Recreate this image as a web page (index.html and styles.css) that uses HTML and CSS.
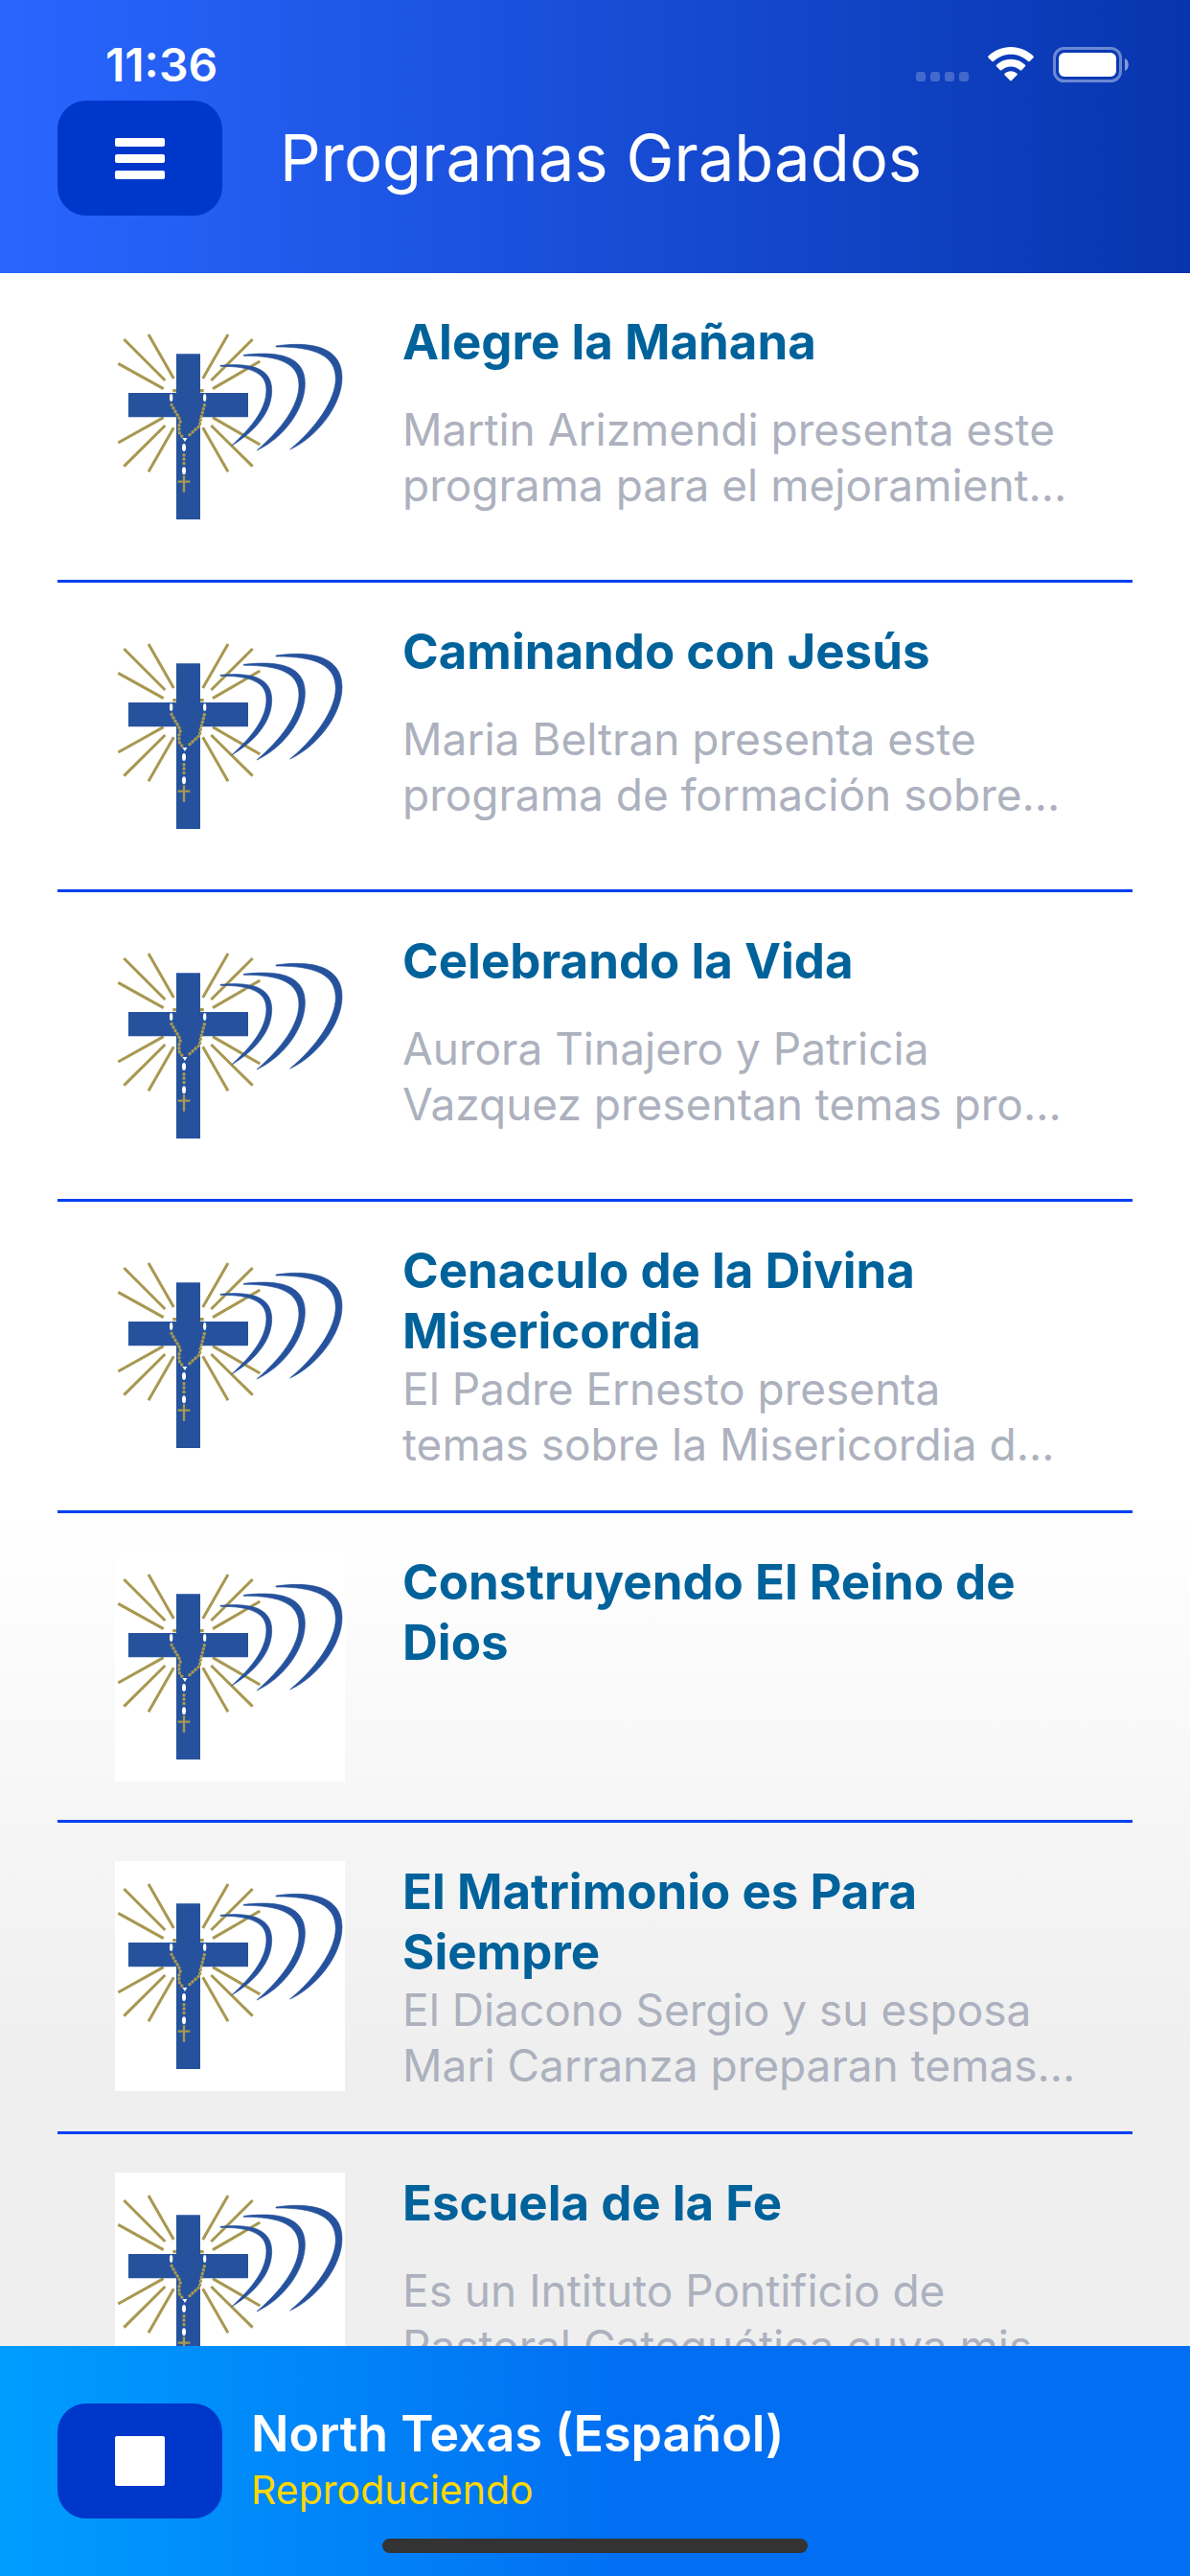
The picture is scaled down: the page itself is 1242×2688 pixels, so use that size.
FILE: index.html
```
<!DOCTYPE html>
<html lang="es">
<head>
    <meta charset="UTF-8">
    <meta name="viewport" content="width=device-width, initial-scale=1.0">
    <title>Programas Grabados</title>
    <link rel="stylesheet" href="styles.css">
</head>
<body>
    <!-- Logo compartido por todos los programas -->
    <svg class="sprite" aria-hidden="true">
        <symbol id="logo" viewBox="60 15 720 720">
            <rect x="60" y="15" width="720" height="720" fill="#fff"/>
            <g stroke="#a89850" stroke-width="9" fill="none">
                <path d="M70 178L212 257M88 102L217 231M165 87L244 225"/>
                <path d="M414 87L335 225M491 102L361 231M514 171L366 257"/>
                <path d="M70 426L212 347M88 500L217 372M165 517L244 379"/>
                <path d="M414 517L335 379M491 500L361 372M514 432L366 347"/>
            </g>
            <path d="M252 148h75v122h150v76H327v320h-75V346H102v-76h150z" fill="#26529d"/>
            <g fill="#26529d" stroke="#26529d" stroke-width="2">
                <path d="M390 184C480 176 551 188 551 262C551 330 500 390 425 435C490 375 534 320 534 260C534 208 485 186 390 187z"/>
                <path d="M463 151C560 140 655 148 655 240C655 320 590 410 504 450C580 385 636 310 636 245C636 178 575 153 463 154z"/>
                <path d="M564 123C670 108 771 123 771 222C771 310 690 410 608 447C690 380 751 290 751 226C751 155 690 125 564 126z"/>
            </g>
            <g stroke="#a89850" stroke-width="10" stroke-linecap="round" fill="none">
                <path d="M241 263h11M327 263h11" stroke-linecap="butt"/>
                <path d="M237 307L247 325L258 343L265 358L260 375L262 395L270 406" stroke-dasharray="1 11"/>
                <path d="M340 308L333 335L328 355L325 374L308 388L288 406" stroke-dasharray="1 11"/>
                <path d="M276 464v30" stroke-dasharray="1 12"/>
            </g>
            <g fill="#fff">
                <ellipse cx="236" cy="285" rx="5" ry="12"/>
                <ellipse cx="341" cy="285" rx="5" ry="12"/>
                <ellipse cx="276" cy="441" rx="6" ry="12"/>
                <ellipse cx="276" cy="514" rx="6" ry="12"/>
                <path d="M271 411h15l-7 12z"/>
            </g>
            <path d="M276 529v52M257 548h38" stroke="#a89850" stroke-width="7"/>
        </symbol>
    </svg>

    <header class="header">
        <div class="status-bar">
            <time class="status-time">11:36</time>
            <div class="status-icons">
                <svg class="icon-signal" viewBox="0 0 55 36" aria-hidden="true">
                    <g fill="#fff" opacity=".22">
                        <rect x="0" y="26" width="10" height="10" rx="3"/>
                        <rect x="15" y="26" width="10" height="10" rx="3"/>
                        <rect x="30" y="26" width="10" height="10" rx="3"/>
                        <rect x="45" y="26" width="10" height="10" rx="3"/>
                    </g>
                </svg>
                <svg class="icon-wifi" viewBox="0 0 48 36" aria-hidden="true">
                    <g fill="#fff">
                        <path d="M24 0C33 0 41 3.500 47.500 9.500Q48.300 10.300 47.500 11.200L43.700 15Q43 15.600 42.200 15C37 10.300 31 7.700 24 7.700S11 10.300 5.800 15Q5 15.600 4.300 15L.5 11.200Q-.3 10.300.5 9.500C7 3.500 15 0 24 0z"/>
                        <path d="M24 12.700C30 12.700 35 15 39 18.700Q39.700 19.500 39 20.300L35.200 24.200Q34.400 24.800 33.600 24.200C31 21.800 27.800 20.400 24 20.400S17 21.800 14.400 24.200Q13.600 24.800 12.800 24.200L9 20.300Q8.300 19.500 9 18.700C13 15 18 12.700 24 12.700z"/>
                        <path d="M24 25.200C26.500 25.200 28.700 26.100 30.500 27.700Q31.300 28.500 30.500 29.300L24.800 35.100Q24 35.800 23.200 35.100L17.500 29.300Q16.700 28.500 17.500 27.700C19.300 26.100 21.500 25.200 24 25.200z"/>
                    </g>
                </svg>
                <svg class="icon-battery" viewBox="0 0 79 37" aria-hidden="true">
                    <rect x="1.500" y="1.500" width="69" height="34" rx="10" fill="none" stroke="#fff" stroke-opacity=".4" stroke-width="3"/>
                    <rect x="6" y="6" width="60" height="25" rx="6" fill="#fff"/>
                    <path d="M75 12C80 14 80 23 75 25z" fill="#fff" opacity=".5"/>
                </svg>
            </div>
        </div>
        <div class="title-bar">
            <button class="btn" type="button" aria-label="Menú">
                <svg class="btn-icon" viewBox="0 0 52 52" aria-hidden="true">
                    <g fill="#fff">
                        <rect y="5" width="52" height="9" rx="2"/>
                        <rect y="22" width="52" height="9" rx="2"/>
                        <rect y="39" width="52" height="9" rx="2"/>
                    </g>
                </svg>
            </button>
            <h1 class="page-title">Programas Grabados</h1>
        </div>
    </header>

    <main class="content">
        <ul class="program-list">
            <li class="program">
                <svg class="program-logo" aria-hidden="true"><use href="#logo"/></svg>
                <div class="program-text">
                    <h2>Alegre la Mañana</h2>
                    <p>Martin Arizmendi presenta este<br>programa para el mejoramient…</p>
                </div>
            </li>
            <li class="program">
                <svg class="program-logo" aria-hidden="true"><use href="#logo"/></svg>
                <div class="program-text">
                    <h2>Caminando con Jesús</h2>
                    <p>Maria Beltran presenta este<br>programa de formación sobre…</p>
                </div>
            </li>
            <li class="program">
                <svg class="program-logo" aria-hidden="true"><use href="#logo"/></svg>
                <div class="program-text">
                    <h2>Celebrando la Vida</h2>
                    <p>Aurora Tinajero y Patricia<br>Vazquez presentan temas pro…</p>
                </div>
            </li>
            <li class="program">
                <svg class="program-logo" aria-hidden="true"><use href="#logo"/></svg>
                <div class="program-text">
                    <h2>Cenaculo de la Divina<br>Misericordia</h2>
                    <p>El Padre Ernesto presenta<br>temas sobre la Misericordia d…</p>
                </div>
            </li>
            <li class="program">
                <svg class="program-logo" aria-hidden="true"><use href="#logo"/></svg>
                <div class="program-text">
                    <h2>Construyendo El Reino de<br>Dios</h2>
                </div>
            </li>
            <li class="program">
                <svg class="program-logo" aria-hidden="true"><use href="#logo"/></svg>
                <div class="program-text">
                    <h2>El Matrimonio es Para<br>Siempre</h2>
                    <p>El Diacono Sergio y su esposa<br>Mari Carranza preparan temas…</p>
                </div>
            </li>
            <li class="program">
                <svg class="program-logo" aria-hidden="true"><use href="#logo"/></svg>
                <div class="program-text">
                    <h2>Escuela de la Fe</h2>
                    <p>Es un Intituto Pontificio de<br>Pastoral Catequética cuya mis…</p>
                </div>
            </li>
        </ul>
    </main>

    <footer class="player">
        <button class="btn" type="button" aria-label="Detener">
            <svg class="btn-icon" viewBox="0 0 52 52" aria-hidden="true">
                <rect width="52" height="52" rx="2" fill="#fff"/>
            </svg>
        </button>
        <div class="player-text">
            <p class="station">North Texas (Español)</p>
            <p class="state">Reproduciendo</p>
        </div>
        <div class="home-indicator"></div>
    </footer>
</body>
</html>
```
FILE: styles.css
```
:root {
    --button-color: #0037cb;
    --title-color: #00629b;
    --text-color: #adb1be;
    --line-color: #0040f2;
}

* {
    box-sizing: border-box;
    margin: 0;
    padding: 0;
}

body {
    font-family: Inter, 'Liberation Sans', sans-serif;
    height: 100vh;
    display: flex;
    flex-direction: column;
    background-color: #efefef;
}

.sprite {
    position: absolute;
    width: 0;
    height: 0;
}

.header {
    flex: none;
    padding-bottom: 60px;
    color: white;
    background: linear-gradient(90deg, #2966ff, #0735ae);
}

.status-bar {
    display: flex;
    justify-content: space-between;
    align-items: center;
    height: 105px;
    padding: 30px 64px 0 110px;
}

.status-time {
    font-size: 48px;
    font-weight: 600;
}

.status-icons {
    display: flex;
    gap: 20px;
}

.icon-signal {
    width: 55px;
    height: 36px;
}

.icon-wifi {
    width: 48px;
    height: 36px;
}

.icon-battery {
    width: 79px;
    height: 37px;
}

.title-bar {
    display: flex;
    align-items: center;
    gap: 60px;
    padding: 0 60px;
}

.page-title {
    font-size: 67px;
    font-weight: 400;
    line-height: 84px;
}

.btn {
    flex: none;
    display: flex;
    justify-content: center;
    align-items: center;
    width: 172px;
    height: 120px;
    border: none;
    border-radius: 30px;
    background-color: var(--button-color);
    cursor: pointer;
}

.btn-icon {
    width: 52px;
    height: 52px;
}

.content {
    flex: 1;
    min-height: 0;
    overflow: hidden;
    padding: 0 60px;
    background: linear-gradient(180deg, #fff 60%, #efefef 86%);
}

.program-list {
    list-style: none;
}

.program {
    display: flex;
    gap: 60px;
    padding: 40px 60px;
    border-bottom: 3px solid var(--line-color);
}

.program-logo {
    flex: none;
    width: 240px;
    height: 240px;
}

.program-text {
    flex: 1;
    min-width: 0;
    display: flex;
    flex-direction: column;
    white-space: nowrap;
}

.program-text h2 {
    color: var(--title-color);
    font-size: 51px;
    font-weight: 700;
    line-height: 63px;
}

.program-text p {
    margin: auto 0;
    color: var(--text-color);
    font-size: 46px;
    line-height: 58px;
}

.player {
    position: relative;
    flex: none;
    display: flex;
    gap: 30px;
    padding: 60px;
    color: white;
    background: linear-gradient(90deg, #009dff, #026ff2 52%);
}

.station {
    font-size: 52px;
    font-weight: 600;
    line-height: 64px;
}

.state {
    color: #ffd800;
    font-size: 41px;
    line-height: 52px;
}

.home-indicator {
    position: absolute;
    left: 50%;
    bottom: 24px;
    width: 444px;
    height: 15px;
    border-radius: 8px;
    background-color: #333;
    transform: translateX(-50%);
}
```
